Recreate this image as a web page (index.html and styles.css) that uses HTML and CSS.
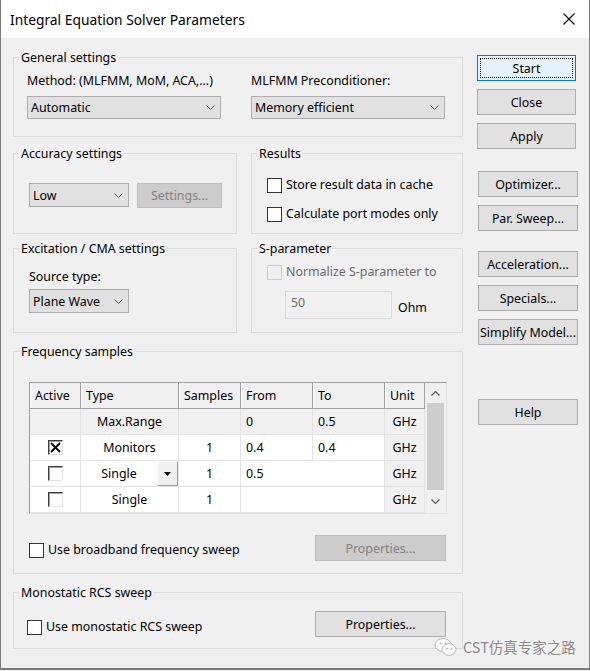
FILE: index.html
```html
<!DOCTYPE html>
<html lang="en">
<head>
    <meta charset="UTF-8">
    <title>Integral Equation Solver Parameters</title>
    <link rel="stylesheet" href="styles.css">
</head>
<body>
<div class="window">
    <div class="titlebar">
        <span class="title">Integral Equation Solver Parameters</span>
        <svg class="close-x" width="12" height="12" viewBox="0 0 12 12">
            <path d="M0.5 0.5 L11.5 11.5 M11.5 0.5 L0.5 11.5" stroke="#000" stroke-width="1.1" fill="none"/>
        </svg>
    </div>

    <div class="client">
        <div class="main">
            <div class="group general">
                <div class="caption">General settings</div>
                <div class="two-col">
                    <div>
                        <div class="label">Method: (MLFMM, MoM, ACA,...)</div>
                        <div class="combo wide"><span>Automatic</span><svg class="chev" width="9" height="5" viewBox="0 0 9 5"><path d="M0.5 0.5 L4.5 4.5 L8.5 0.5" stroke="#555" fill="none"/></svg></div>
                    </div>
                    <div>
                        <div class="label">MLFMM Preconditioner:</div>
                        <div class="combo wide"><span>Memory efficient</span><svg class="chev" width="9" height="5" viewBox="0 0 9 5"><path d="M0.5 0.5 L4.5 4.5 L8.5 0.5" stroke="#555" fill="none"/></svg></div>
                    </div>
                </div>
            </div>

            <div class="row">
                <div class="group accuracy">
                    <div class="caption">Accuracy settings</div>
                    <div class="inline">
                        <div class="combo small"><span>Low</span><svg class="chev" width="9" height="5" viewBox="0 0 9 5"><path d="M0.5 0.5 L4.5 4.5 L8.5 0.5" stroke="#555" fill="none"/></svg></div>
                        <div class="btn disabled settings">Settings...</div>
                    </div>
                </div>
                <div class="group results">
                    <div class="caption">Results</div>
                    <div class="check first"><span class="box"></span>Store result data in cache</div>
                    <div class="check second"><span class="box"></span>Calculate port modes only</div>
                </div>
            </div>

            <div class="row">
                <div class="group excitation">
                    <div class="caption">Excitation / CMA settings</div>
                    <div class="label source">Source type:</div>
                    <div class="combo small"><span>Plane Wave</span><svg class="chev" width="9" height="5" viewBox="0 0 9 5"><path d="M0.5 0.5 L4.5 4.5 L8.5 0.5" stroke="#555" fill="none"/></svg></div>
                </div>
                <div class="group sparam">
                    <div class="caption">S-parameter</div>
                    <div class="check off"><span class="box"></span>Normalize S-parameter to</div>
                    <div class="ohm-row">
                        <div class="textbox">50</div>
                        <span class="ohm">Ohm</span>
                    </div>
                </div>
            </div>

            <div class="group frequency">
                <div class="caption">Frequency samples</div>
                <div class="grid-wrap">
                    <div class="grid">
                        <div class="hd">Active</div>
                        <div class="hd">Type</div>
                        <div class="hd">Samples</div>
                        <div class="hd">From</div>
                        <div class="hd">To</div>
                        <div class="hd">Unit</div>

                        <div class="cell grey"></div>
                        <div class="cell grey center">Max.Range</div>
                        <div class="cell grey"></div>
                        <div class="cell grey">0</div>
                        <div class="cell grey">0.5</div>
                        <div class="cell grey center">GHz</div>

                        <div class="cell center"><span class="cb3d">
                            <svg width="13" height="13" viewBox="0 0 13 13"><path d="M2 2 L11 11 M11 2 L2 11" stroke="#000" stroke-width="1.8" fill="none"/></svg>
                        </span></div>
                        <div class="cell center">Monitors</div>
                        <div class="cell center">1</div>
                        <div class="cell">0.4</div>
                        <div class="cell">0.4</div>
                        <div class="cell grey center">GHz</div>

                        <div class="cell center"><span class="cb3d"></span></div>
                        <div class="cell type-edit">
                            <span class="type-text">Single</span>
                            <span class="drop"><svg width="7" height="4" viewBox="0 0 7 4"><path d="M0 0 H7 L3.5 4 Z" fill="#000"/></svg></span>
                        </div>
                        <div class="cell center">1</div>
                        <div class="cell span2">0.5</div>
                        <div class="cell grey center">GHz</div>

                        <div class="cell center"><span class="cb3d"></span></div>
                        <div class="cell center">Single</div>
                        <div class="cell center">1</div>
                        <div class="cell span2"></div>
                        <div class="cell grey center">GHz</div>
                    </div>
                    <div class="vscroll">
                        <div class="arrow"><svg width="9" height="5" viewBox="0 0 9 5"><path d="M0.5 4.5 L4.5 0.5 L8.5 4.5" stroke="#606060" stroke-width="1.3" fill="none"/></svg></div>
                        <div class="thumb"></div>
                        <div class="arrow down"><svg width="9" height="5" viewBox="0 0 9 5"><path d="M0.5 0.5 L4.5 4.5 L8.5 0.5" stroke="#606060" stroke-width="1.3" fill="none"/></svg></div>
                    </div>
                </div>
                <div class="bottom-row">
                    <div class="check"><span class="box"></span>Use broadband frequency sweep</div>
                    <div class="btn disabled props">Properties...</div>
                </div>
            </div>

            <div class="group monostatic">
                <div class="caption">Monostatic RCS sweep</div>
                <div class="bottom-row">
                    <div class="check"><span class="box"></span>Use monostatic RCS sweep</div>
                    <div class="btn props">Properties...</div>
                </div>
            </div>
        </div>

        <div class="side">
            <div class="btn-group top">
                <div class="btn default">Start</div>
                <div class="btn">Close</div>
                <div class="btn">Apply</div>
            </div>
            <div class="btn-group">
                <div class="btn">Optimizer...</div>
                <div class="btn">Par. Sweep...</div>
            </div>
            <div class="btn-group">
                <div class="btn">Acceleration...</div>
                <div class="btn">Specials...</div>
                <div class="btn">Simplify Model...</div>
            </div>
            <div class="btn-group help">
                <div class="btn">Help</div>
            </div>
        </div>
    </div>

    <div class="watermark">
        <svg width="24" height="20" viewBox="0 0 24 20">
            <ellipse cx="9" cy="8" rx="8" ry="6.5" fill="#fff" stroke="#b5b5b5" stroke-width="1"/>
            <ellipse cx="15" cy="12.5" rx="7" ry="5.8" fill="#fff" stroke="#b5b5b5" stroke-width="1"/>
            <circle cx="6.5" cy="6.5" r="1" fill="#b5b5b5"/>
            <circle cx="11.5" cy="6.5" r="1" fill="#b5b5b5"/>
            <circle cx="13" cy="11.5" r="0.9" fill="#b5b5b5"/>
            <circle cx="17.5" cy="11.5" r="0.9" fill="#b5b5b5"/>
        </svg>
        <span>CST仿真专家之路</span>
    </div>
</div>
</body>
</html>
```

FILE: styles.css
```css
* {
    margin: 0;
    padding: 0;
    box-sizing: border-box;
}
body {
    background: #f0f0f0;
    font-family: "Noto Sans", "Open Sans", sans-serif;
    font-size: 12.4px;
    color: #000;
    white-space: nowrap;
}
.window {
    width: 590px;
    height: 670px;
    background: #f0f0f0;
    border-left: 1px solid #7a7a7a;
    border-right: 1px solid #7a7a7a;
    border-bottom: 2px solid #7a7a7a;
    position: relative;
}
.titlebar {
    height: 38px;
    background: #fff;
    display: flex;
    align-items: center;
    justify-content: space-between;
    padding: 0 14px 0 9px;
}
.title {
    font-size: 13.8px;
    margin-top: 1px;
}
.close-x {
    margin-bottom: 1px;
}
.client {
    display: flex;
    padding-left: 12px;
}
.main {
    width: 450px;
    padding-top: 19px;
}
.side {
    margin-left: 14px;
    padding-top: 17px;
}

/* group boxes */
.group {
    border: 1px solid #dcdcdc;
    padding-left: var(--pad);
}
.caption {
    width: fit-content;
    height: 17px;
    line-height: 17px;
    margin: -9px 0 0 calc(6px - var(--pad));
    padding: 0 1px;
    background: #f0f0f0;
}
.row {
    display: flex;
    gap: 14px;
}
.general {
    --pad: 13px;
    height: 80px;
    margin-bottom: 16px;
}
.two-col {
    display: grid;
    grid-template-columns: 194px 194px;
    column-gap: 30px;
    margin-top: 6px;
}
.label {
    line-height: 18px;
    height: 18px;
    margin-bottom: 6px;
}
.accuracy, .excitation {
    --pad: 15px;
    width: 224px;
}
.results, .sparam {
    --pad: 15px;
    width: 212px;
}
.accuracy, .results {
    height: 81px;
    margin-bottom: 14px;
}
.excitation, .sparam {
    height: 85px;
}
.inline {
    display: flex;
    gap: 8px;
    margin-top: 21px;
}
.source {
    margin-top: 11px;
    margin-bottom: 3px;
}

/* combo boxes */
.combo {
    height: 23px;
    background: #e1e1e1;
    border: 1px solid #adadad;
    display: flex;
    align-items: center;
    justify-content: space-between;
    padding: 0 5px 0 3px;
}
.combo.small {
    width: 100px;
    height: 24px;
}
.combo.wide {
    width: 194px;
}

/* buttons */
.btn {
    height: 26px;
    border: 1px solid #adadad;
    background: #e1e1e1;
    display: flex;
    align-items: center;
    justify-content: center;
    position: relative;
}
.btn.disabled {
    background: #cccccc;
    border-color: #bfbfbf;
    color: #838383;
}
.settings {
    width: 85px;
    height: 25px;
}
.props {
    width: 131px;
}
.btn-group {
    display: flex;
    flex-direction: column;
    gap: 8px;
    width: 100px;
    margin-left: 1px;
    margin-top: 22px;
}
.btn-group.top {
    width: 99px;
    margin-left: 0;
    margin-top: 0;
}
.btn-group:nth-child(3) {
    margin-top: 20px;
}
.btn-group.help {
    margin-top: 54px;
}
.btn.default {
    border-color: #0078d7;
    background: #e5f1fb;
}
.btn.default::after {
    content: "";
    position: absolute;
    inset: 2px;
    border: 1px dotted #000;
}

/* check boxes */
.check {
    display: flex;
    align-items: center;
    line-height: 18px;
}
.check .box {
    width: 15px;
    height: 15px;
    border: 1px solid #333;
    background: #fff;
    margin-right: 4px;
}
.check.off {
    color: #6d6d6d;
    margin-top: 6px;
}
.check.off .box {
    border-color: #cccccc;
    background: #f0f0f0;
}
.results .first {
    margin-top: 14px;
}
.results .second {
    margin-top: 11px;
}
.ohm-row {
    display: flex;
    align-items: center;
    margin: 10px 0 0 18px;
}
.textbox {
    width: 107px;
    height: 28px;
    border: 1px solid #d9d9d9;
    color: #6d6d6d;
    padding: 0 0 6px 5px;
    display: flex;
    align-items: center;
}
.ohm {
    margin: 5px 0 0 6px;
}

/* frequency table */
.frequency {
    --pad: 15px;
    height: 223px;
    margin-top: 18px;
}
.grid-wrap {
    display: flex;
    width: 418px;
    margin-top: 22px;
    border-top: 1px solid #a0a0a0;
    border-left: 1px solid #a0a0a0;
    border-right: 1px solid #e3e3e3;
    border-bottom: 1px solid #e3e3e3;
}
.grid {
    display: grid;
    grid-template-columns: 51px 98px 62px 72px 72px 40px;
    grid-auto-rows: 26px;
    background: #fff;
}
.hd {
    background: #f0f0f0;
    border-right: 1px solid #a0a0a0;
    border-bottom: 1px solid #a0a0a0;
    box-shadow: inset 1px 0 #fff;
    padding-left: 5px;
    display: flex;
    align-items: center;
}
.cell {
    border-right: 1px solid #e3e3e3;
    border-bottom: 1px solid #e3e3e3;
    padding-left: 5px;
    display: flex;
    align-items: center;
}
.cell.grey {
    background: #f0f0f0;
}
.cell.center {
    justify-content: center;
    padding-left: 0;
}
.cell.span2 {
    grid-column: span 2;
}
.type-edit {
    padding-left: 0;
}
.type-text {
    flex: 1;
    text-align: center;
}
.drop {
    width: 21px;
    height: 25px;
    background: #f0f0f0;
    border-top: 1px solid #fff;
    border-left: 1px solid #fff;
    border-right: 1px solid #a0a0a0;
    border-bottom: 1px solid #a0a0a0;
    display: flex;
    align-items: center;
    justify-content: center;
}
.cb3d {
    width: 15px;
    height: 15px;
    background: #fff;
    border: 1px solid;
    border-color: #3c3c3c #e3e3e3 #e3e3e3 #3c3c3c;
    box-shadow: inset 1px 1px #a0a0a0;
    display: flex;
    align-items: center;
    justify-content: center;
}
.vscroll {
    width: 21px;
    background: #f0f0f0;
    display: flex;
    flex-direction: column;
    align-items: center;
}
.arrow {
    height: 20px;
    display: flex;
    align-items: center;
    justify-content: center;
}
.arrow.down {
    height: 23px;
}
.thumb {
    width: 17px;
    flex: 1;
    background: #cdcdcd;
}
.bottom-row {
    display: flex;
    align-items: center;
    justify-content: space-between;
    width: 417px;
    margin-top: 21px;
}
.bottom-row .check {
    margin-top: 4px;
}
.monostatic {
    --pad: 13px;
    height: 57px;
    margin-top: 18px;
}
.monostatic .bottom-row {
    width: 419px;
    margin-top: 10px;
}
.monostatic .bottom-row .check {
    margin-top: 6px;
}

/* watermark overlay */
.watermark {
    position: absolute;
    left: 433px;
    top: 636px;
    display: flex;
    align-items: center;
    gap: 5px;
    color: #8a8a8a;
    font-family: "Noto Sans CJK SC", sans-serif;
    font-size: 14.5px;
    text-shadow: 0 0 2px #fff;
}
```
